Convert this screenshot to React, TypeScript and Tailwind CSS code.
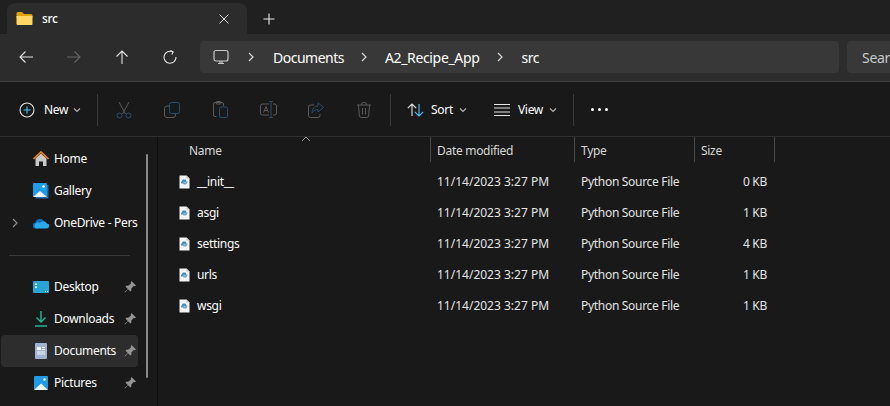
import { ReactNode } from "react";

// small drawings
const FolderIcon = () => (
    <svg width="17" height="15" viewBox="0 0 17 15">
        <path d="M0.5 2.5a1.5 1.5 0 0 1 1.5-1.5h4l2 2h7a1.5 1.5 0 0 1 1.5 1.5v2H0.5z" fill="#e0a100" />
        <path d="M0.5 5h16v8a1 1 0 0 1-1 1H1.500a1 1 0 0 1-1-1z" fill="#fcd765" />
    </svg>
);

const Chevron = ({ className = "" }: { className?: string }) => (
    <svg width="8" height="10" viewBox="0 0 8 10" fill="none" stroke="currentColor" strokeWidth="1.2" className={className}>
        <path d="M2 1l4 4-4 4" />
    </svg>
);

const SmallDown = () => (
    <svg width="8" height="6" viewBox="0 0 8 6" fill="none" stroke="#b5b5b5" strokeWidth="1.1">
        <path d="M1 1.500l3 3 3-3" />
    </svg>
);

const Arrow = ({ dir, color }: { dir: "left" | "right" | "up"; color: string }) => {
    const d = {
        left: "M2 8h13M7.500 2.500L2 8l5.500 5.500",
        right: "M1 8h13M8.500 2.500L14 8l-5.500 5.500",
        up: "M8 15V2M2.500 7.500L8 2l5.500 5.500",
    }[dir];
    return (
        <svg width="16" height="16" viewBox="0 0 16 16" fill="none" stroke={color} strokeWidth="1.1">
            <path d={d} />
        </svg>
    );
};

const Refresh = () => (
    <svg width="14" height="14" viewBox="0 0 14 14" fill="none" stroke="#e4e4e4" strokeWidth="1.1">
        <path d="M9.500 1.800A6 6 0 1 0 13 7" />
        <path d="M7.500 0.500l2.700 1.400-1.400 2.700" />
    </svg>
);

const Monitor = () => (
    <svg width="16" height="16" viewBox="0 0 16 16" fill="none" stroke="#c8c8c8" strokeWidth="1.2">
        <rect x="1" y="1.500" width="14" height="10.500" rx="2" />
        <path d="M5 14.500h6M7 12v2M9 12v2" />
    </svg>
);

const GRAY = "#5b5b5b";
const BLUE = "#24506f";

const CutIcon = () => (
    <svg width="16" height="18" viewBox="0 0 16 18" fill="none" strokeWidth="1">
        <path d="M3 1l6.500 12M13 1L6.500 13" stroke={GRAY} />
        <circle cx="3.500" cy="14.500" r="2.500" stroke={BLUE} />
        <circle cx="12.500" cy="14.500" r="2.500" stroke={BLUE} />
    </svg>
);

const CopyIcon = () => (
    <svg width="16" height="16" viewBox="0 0 16 16" fill="none" strokeWidth="1">
        <rect x="5.500" y="0.500" width="10" height="11" rx="2" stroke={BLUE} />
        <path d="M5 4H3a2.500 2.500 0 0 0-2.500 2.500V13A2.500 2.500 0 0 0 3 15.500h6a2.500 2.500 0 0 0 2.500-2.500v-1" stroke={GRAY} />
    </svg>
);

const PasteIcon = () => (
    <svg width="15" height="17" viewBox="0 0 15 17" fill="none" strokeWidth="1">
        <path d="M3.500 15.500H2A1.500 1.500 0 0 1 .5 14V3A1.500 1.500 0 0 1 2 1.500h7A1.500 1.500 0 0 1 10.500 3v2" stroke={GRAY} />
        <rect x="3" y="0.500" width="5" height="2.500" rx="1" stroke={GRAY} />
        <rect x="6.500" y="6" width="8" height="10.500" rx="1.500" stroke={BLUE} />
    </svg>
);

const RenameIcon = () => (
    <svg width="17" height="17" viewBox="0 0 17 17" fill="none" strokeWidth="1">
        <path d="M9 3H2.500A2 2 0 0 0 .5 5v7a2 2 0 0 0 2 2H9M13 3h1.500a2 2 0 0 1 2 2v7a2 2 0 0 1-2 2H13" stroke={GRAY} />
        <path d="M3.500 11.500L6 5.500l2.500 6M4.500 9.500h3" stroke={GRAY} />
        <path d="M9 .5h4M9 16.500h4M11 .5v16" stroke={BLUE} />
    </svg>
);

const ShareIcon = () => (
    <svg width="16" height="16" viewBox="0 0 16 16" fill="none" strokeWidth="1">
        <path d="M6 3H2.500a2 2 0 0 0-2 2v8.500a2 2 0 0 0 2 2H10a2 2 0 0 0 2-2V12" stroke={GRAY} />
        <path d="M10 .8l5.500 4.700L10 10V7.500C7 7.500 5 9 4 11c0-4 2.500-7 6-7z" stroke={BLUE} />
    </svg>
);

const TrashIcon = () => (
    <svg width="14" height="16" viewBox="0 0 14 16" fill="none" stroke={GRAY} strokeWidth="1">
        <path d="M0 3h14M4.500 3V2.500a2 2 0 0 1 2-2h1a2 2 0 0 1 2 2V3M1.500 3l.8 10.500a2 2 0 0 0 2 2h5.400a2 2 0 0 0 2-2L12.500 3M5.500 6v6.500M8.500 6v6.500" />
    </svg>
);

const PlusCircle = () => (
    <svg width="16" height="16" viewBox="0 0 16 16" fill="none" strokeWidth="1.1">
        <circle cx="8" cy="8" r="7" stroke="#e6e6e6" />
        <path d="M8 4.500v7M4.500 8h7" stroke="#4cc2ff" />
    </svg>
);

const SortIcon = () => (
    <svg width="17" height="14" viewBox="0 0 17 14" fill="none" strokeWidth="1.1">
        <path d="M5 13V1M.8 5.200L5 1l4.200 4.200" stroke="#e6e6e6" />
        <path d="M12 1v12M7.800 8.800L12 13l4.200-4.200" stroke="#4cc2ff" />
    </svg>
);

const ViewIcon = () => (
    <svg width="16" height="12" viewBox="0 0 16 12" fill="none" stroke="#e6e6e6" strokeWidth="1">
        <path d="M0 .5h16M0 4h16M0 8h16M0 11.500h16" />
    </svg>
);

const HomeIcon = () => (
    <svg width="16" height="16" viewBox="0 0 16 16">
        <path d="M2.500 7.500L8 2.500l5.500 5V15h-3.500v-4.500H6V15H2.500z" fill="#c9c9c9" />
        <path d="M.5 8L8 1l7.500 7" fill="none" stroke="#e8821e" strokeWidth="1.700" />
    </svg>
);

const GalleryIcon = () => (
    <svg width="16" height="16" viewBox="0 0 16 16">
        <path d="M14 2h1.500v13.500H3V14h11z" fill="#1a6fb5" />
        <rect x="0" y="0" width="14" height="14" rx="1" fill="#1f9be8" />
        <path d="M0 14l7-6 7 6z" fill="#eef6fc" />
        <circle cx="10.500" cy="3.500" r="1.300" fill="#fff" />
    </svg>
);

const CloudIcon = () => (
    <svg width="16" height="11" viewBox="0 0 16 11">
        <path d="M3 10.500a3 3 0 0 1-.5-6A4.500 4.500 0 0 1 11 3.500l-3 4-3 3z" fill="#0f6cbd" />
        <path d="M3 10.500h10.500a2.500 2.500 0 0 0 .3-5A4 4 0 0 0 7 5a3 3 0 0 0-4 5.500z" fill="#29a8ea" />
    </svg>
);

const DesktopIcon = () => (
    <svg width="16" height="12" viewBox="0 0 16 12">
        <rect width="16" height="12" rx="1" fill="#28a5d8" />
        <rect x="2" y="2.500" width="2" height="1.500" fill="#e9f6fb" />
        <rect x="2" y="5.500" width="2" height="1.500" fill="#e9f6fb" />
        <rect x="12" y="10" width="1" height="1" fill="#e9f6fb" />
        <rect x="14" y="10" width="1" height="1" fill="#e9f6fb" />
    </svg>
);

const DownloadIcon = () => (
    <svg width="12" height="16" viewBox="0 0 12 16" fill="none" stroke="#1fb58f" strokeWidth="1.500">
        <path d="M6 0v11M1.500 6.500L6 11l4.500-4.500M0 15h12" />
    </svg>
);

const DocumentIcon = () => (
    <svg width="12" height="16" viewBox="0 0 12 16">
        <rect width="12" height="16" rx="1" fill="#9fb4d0" />
        <rect x="2" y="4" width="4" height="3" fill="#f3f6fa" />
        <rect x="7" y="4" width="3" height="1" fill="#f3f6fa" />
        <rect x="7" y="6" width="3" height="1" fill="#f3f6fa" />
        <rect x="2" y="8.500" width="8" height="1" fill="#f3f6fa" />
        <rect x="2" y="10.500" width="8" height="1" fill="#f3f6fa" />
    </svg>
);

const PicturesIcon = () => (
    <svg width="14" height="14" viewBox="0 0 14 14">
        <rect width="14" height="14" rx="1" fill="#1f9be8" />
        <path d="M0 14l7-6.500 7 6.500z" fill="#eef6fc" />
        <circle cx="10.500" cy="3.500" r="1.200" fill="#fff" />
    </svg>
);

const PinIcon = () => (
    <svg width="12" height="12" viewBox="0 0 12 12" fill="#939393">
        <path d="M7.500 0L12 4.500 10.800 5.300 9.800 5 7.400 7.400 7.300 9.700 6.300 10.500 4 8.200 1 11.500 0.500 11 3.800 8 1.500 5.700 2.300 4.700 4.600 4.600 7 2.200 6.700 1.200z" />
    </svg>
);

const PyFileIcon = () => (
    <svg width="11" height="14" viewBox="0 0 11 14">
        <path d="M0.500 0.500h7l3 3v10h-10z" fill="#f4f4f4" />
        <path d="M7.500 0.500v3h3" fill="#c4c4c4" />
        <path d="M3 6.500V5.500a1.500 1.500 0 0 1 1.500-1H6a1.300 1.300 0 0 1 1.300 1.300V7.500H4.500v1H2.800a1 1 0 0 1-.8-1V7a.6.6 0 0 1 .5-.5z" fill="#4a90bd" />
        <path d="M8 7.500V8.500a1.500 1.500 0 0 1-1.500 1H5.200a1.300 1.300 0 0 1-1.300-1.300v-.4h3V6.500h1.300a1 1 0 0 1 .8 1z" fill="#6fa8cb" />
    </svg>
);

const IconButton = ({ children }: { children: ReactNode }) => (
    <div className="flex h-8 w-12 shrink-0 items-center justify-center">{children}</div>
);

const NavItem = ({ icon, label, pinned, active, chevron }: { icon: ReactNode; label: string; pinned?: boolean; active?: boolean; chevron?: boolean }) => (
    <div className={`ml-px flex h-8 w-[137px] items-center overflow-hidden rounded ${active ? "bg-[#2d2d2d]" : ""}`}>
        <div className="flex w-[11px] shrink-0 justify-end text-[#8a8a8a]">{chevron && <Chevron className="relative left-[7px]" />}</div>
        <div className="ml-[20px] flex w-[18px] shrink-0 justify-center">{icon}</div>
        <span className="ml-[4px] flex-1 overflow-hidden whitespace-nowrap text-white">{label}</span>
        {pinned && (
            <span className="mr-px flex w-[14px] shrink-0 justify-center">
                <PinIcon />
            </span>
        )}
    </div>
);

const files = [
    { name: "__init__", size: "0 KB" },
    { name: "asgi", size: "1 KB" },
    { name: "settings", size: "4 KB" },
    { name: "urls", size: "1 KB" },
    { name: "wsgi", size: "1 KB" },
];

const App = () => {
    return (
        <div
            className="flex h-[406px] w-[890px] flex-col overflow-hidden bg-[#191919] text-[12px] tracking-[-0.3px] text-[#e4e4e4]"
            style={{ fontFamily: '"Noto Sans", "Open Sans", sans-serif' }}
        >
            {/* tabs */}
            <div className="flex h-[34px] shrink-0 items-end bg-[#202020] pl-[7px]">
                <div className="flex h-[31px] w-[240px] items-center rounded-t-lg bg-[#2c2c2c] pl-[9px]">
                    <FolderIcon />
                    <span className="ml-[9px] font-medium text-white">src</span>
                    <svg width="10" height="10" viewBox="0 0 10 10" fill="none" stroke="#dcdcdc" strokeWidth="1" className="ml-[161px]">
                        <path d="M.5.5l9 9M9.500.5l-9 9" />
                    </svg>
                </div>
                <svg width="12" height="12" viewBox="0 0 12 12" fill="none" stroke="#e8e8e8" strokeWidth="1.100" className="mb-[9px] ml-[16px]">
                    <path d="M6 .5v11M.5 6h11" />
                </svg>
            </div>

            {/* address bar */}
            <div className="flex h-[48px] shrink-0 items-center border-b border-[#3f3f3f] bg-[#2c2c2c] pb-px pl-[2px]">
                <IconButton><Arrow dir="left" color="#e4e4e4" /></IconButton>
                <IconButton><Arrow dir="right" color="#666666" /></IconButton>
                <IconButton><Arrow dir="up" color="#e4e4e4" /></IconButton>
                <IconButton><Refresh /></IconButton>
                <div className="ml-[6px] flex h-8 w-[639px] shrink-0 items-center rounded bg-[#383838] pl-[13px] text-[14px] tracking-[-0.5px] text-white">
                    <Monitor />
                    <Chevron className="ml-[18px] text-[#d8d8d8]" />
                    <span className="ml-[18px]">Documents</span>
                    <Chevron className="ml-[16px] text-[#d8d8d8]" />
                    <span className="ml-[17px] tracking-[-0.35px]">A2_Recipe_App</span>
                    <Chevron className="ml-[17px] text-[#d8d8d8]" />
                    <span className="ml-[17px]">src</span>
                </div>
                <div className="ml-[8px] flex h-8 flex-1 items-center overflow-hidden whitespace-nowrap rounded-l bg-[#383838] pl-[15px] text-[14px] text-[#c8c8c8]">
                    Search
                </div>
            </div>

            {/* command bar */}
            <div className="flex h-[55px] shrink-0 items-center border-b border-[#2f2f2f] pt-px">
                <div className="flex w-[90px] shrink-0 items-center pl-[19px]">
                    <PlusCircle />
                    <span className="ml-[9px] text-white">New</span>
                    <span className="ml-[5px]"><SmallDown /></span>
                </div>
                <div className="ml-[7px] h-8 w-px shrink-0 bg-[#383838]" />
                <div className="ml-[2px] flex shrink-0">
                    <IconButton><CutIcon /></IconButton>
                    <IconButton><CopyIcon /></IconButton>
                    <IconButton><PasteIcon /></IconButton>
                    <IconButton><RenameIcon /></IconButton>
                    <IconButton><ShareIcon /></IconButton>
                    <IconButton><TrashIcon /></IconButton>
                </div>
                <div className="ml-[2px] h-8 w-px shrink-0 bg-[#383838]" />
                <div className="ml-[16px] flex items-center">
                    <SortIcon />
                    <span className="ml-[7px] text-white">Sort</span>
                    <span className="ml-[6px]"><SmallDown /></span>
                </div>
                <div className="ml-[27px] flex items-center">
                    <ViewIcon />
                    <span className="ml-[8px] text-white">View</span>
                    <span className="ml-[6px]"><SmallDown /></span>
                </div>
                <div className="ml-[16px] h-8 w-px shrink-0 bg-[#383838]" />
                <div className="ml-[17px] flex gap-[4px]">
                    <span className="size-[3px] rounded-full bg-white" />
                    <span className="size-[3px] rounded-full bg-white" />
                    <span className="size-[3px] rounded-full bg-white" />
                </div>
            </div>

            <div className="flex min-h-0 flex-1">
                {/* navigation pane */}
                <div className="relative w-[158px] shrink-0 border-r border-[#0f0f0f] pt-[6px]">
                    <NavItem icon={<HomeIcon />} label="Home" />
                    <NavItem icon={<GalleryIcon />} label="Gallery" />
                    <NavItem icon={<CloudIcon />} label="OneDrive - Personal" chevron />
                    <div className="flex h-8 items-center pl-[9px]">
                        <div className="h-px w-[121px] bg-[#3a3a3a]" />
                    </div>
                    <NavItem icon={<DesktopIcon />} label="Desktop" pinned />
                    <NavItem icon={<DownloadIcon />} label="Downloads" pinned />
                    <NavItem icon={<DocumentIcon />} label="Documents" pinned active />
                    <NavItem icon={<PicturesIcon />} label="Pictures" pinned />
                    <div className="absolute left-[146px] top-[17px] h-[224px] w-[2px] rounded-full bg-[#8a8a8a]" />
                </div>

                {/* details view */}
                <div className="relative flex-1">
                    <svg width="10" height="6" viewBox="0 0 10 6" fill="none" stroke="#9a9a9a" strokeWidth="1" className="absolute left-[143px] top-[-1px]">
                        <path d="M1 5l4-4 4 4" />
                    </svg>
                    <div className="flex h-[25px] text-[#d8d8d8]">
                        <div className="w-[273px] border-r border-[#4a4a4a] pl-[31px] leading-[27px]">Name</div>
                        <div className="w-[144px] border-r border-[#4a4a4a] pl-[6px] leading-[27px]">Date modified</div>
                        <div className="w-[120px] border-r border-[#4a4a4a] pl-[6px] leading-[27px]">Type</div>
                        <div className="w-[80px] border-r border-[#4a4a4a] pl-[6px] leading-[27px]">Size</div>
                    </div>
                    <div className="pt-[4px]">
                        {files.map((file) => (
                            <div key={file.name} className="flex h-[31px] items-center">
                                <div className="flex w-[273px] items-center pl-[21px] text-white">
                                    <PyFileIcon />
                                    <span className="ml-[7px]">{file.name}</span>
                                </div>
                                <div className="w-[144px] pl-[6px] tracking-normal">11/14/2023 3:27 PM</div>
                                <div className="w-[120px] pl-[6px]">Python Source File</div>
                                <div className="w-[72px] text-right">{file.size}</div>
                            </div>
                        ))}
                    </div>
                </div>
            </div>
        </div>
    );
};

export default App;
